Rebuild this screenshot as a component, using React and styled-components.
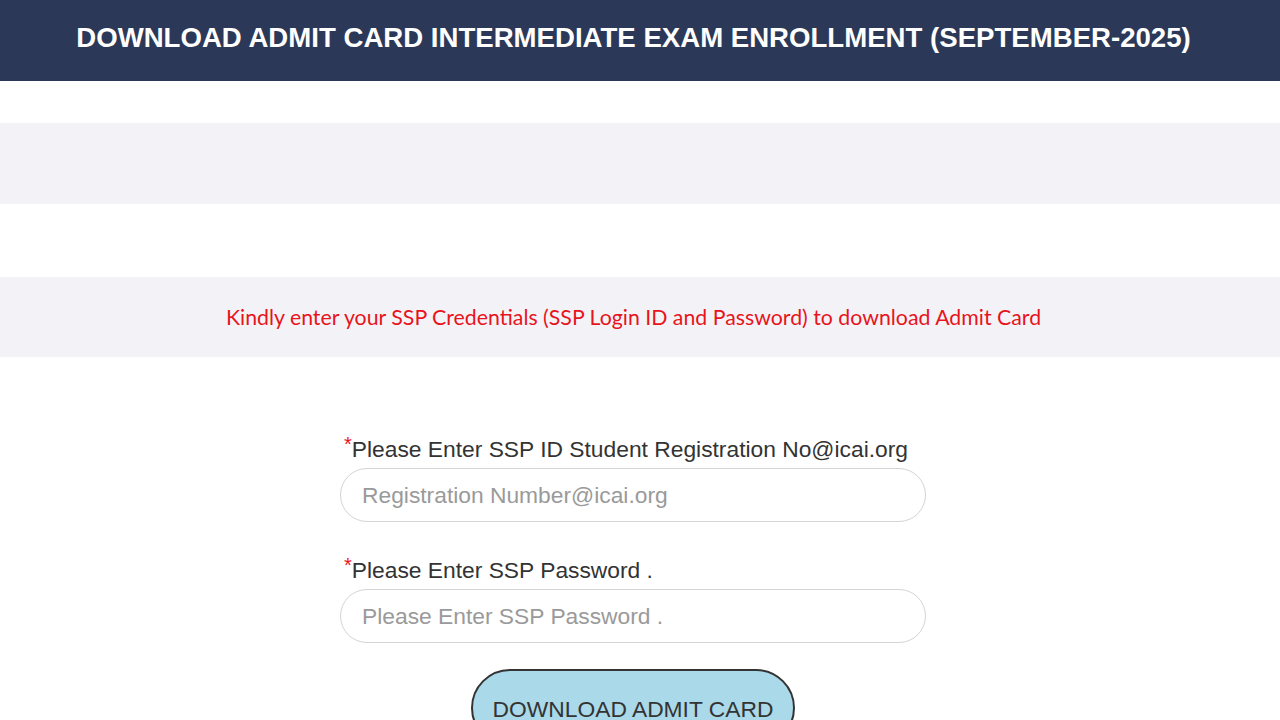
import React from "react";
import styled, { createGlobalStyle } from "styled-components";

const GlobalStyle = createGlobalStyle`
  body {
    margin: 0;
    background: #ffffff;
    font-family: "Liberation Sans", Arial, sans-serif;
  }
`;

const Header = styled.header`
  height: 81px;
  background: #2c3858;
  display: flex;
  align-items: center;
  justify-content: center;
  padding: 0 13px 6px 0;
  box-sizing: border-box;

  h1 {
    margin: 0;
    color: #ffffff;
    font-size: 27.6px;
    font-weight: bold;
    white-space: nowrap;
  }
`;

const Band = styled.div`
  height: ${(p) => p.h}px;
  background: ${(p) => (p.shaded ? "#f3f3f7" : "#ffffff")};
  display: flex;
  align-items: center;
  justify-content: center;
  padding-right: 13px;
`;

const Notice = styled.p`
  margin: 0;
  color: #e8141c;
  font-family: "Lato", "Open Sans", sans-serif;
  font-size: 21.3px;
  white-space: nowrap;
`;

const Form = styled.form`
  width: 586px;
  margin: 79px 0 0 calc(50% - 300px);
  display: flex;
  flex-direction: column;
`;

const Field = styled.div`
  display: flex;
  flex-direction: column;
  margin-bottom: ${(p) => (p.last ? 26 : 35)}px;
`;

const Label = styled.label`
  color: #333333;
  font-size: 22.8px;
  padding-left: 4px;
  margin-bottom: 6px;
  line-height: 26px;
  white-space: nowrap;

  span {
    color: #e8141c;
    font-size: 20px;
    vertical-align: top;
    line-height: 16px;
  }
`;

const Input = styled.input`
  height: 54px;
  box-sizing: border-box;
  border: 1px solid #d4d4d4;
  border-radius: 27px;
  padding: 0 21px;
  font-family: "Liberation Sans", Arial, sans-serif;
  font-size: 22.8px;
  color: #333;
  background: #fff;
  outline: none;

  &::placeholder {
    color: #9a9a9a;
  }
`;

const Button = styled.button`
  align-self: center;
  height: 78px;
  padding: 27px 20px 0;
  background: #aad9e9;
  border: 2px solid #333333;
  border-radius: 40px;
  color: #333333;
  font-family: "Liberation Sans", Arial, sans-serif;
  font-size: 22.8px;
  line-height: 1;
  display: flex;
  align-items: flex-start;
  box-sizing: border-box;
`;

export default function App() {
  return (
    <>
      <GlobalStyle />
      <Header>
        <h1>DOWNLOAD ADMIT CARD INTERMEDIATE EXAM ENROLLMENT (SEPTEMBER-2025)</h1>
      </Header>
      <Band h={42} />
      <Band h={81} shaded />
      <Band h={73} />
      <Band h={80} shaded>
        <Notice>
          Kindly enter your SSP Credentials (SSP Login ID and Password) to download Admit Card
        </Notice>
      </Band>
      <Form onSubmit={(e) => e.preventDefault()}>
        <Field>
          <Label>
            <span>*</span>Please Enter SSP ID Student Registration No@icai.org
          </Label>
          <Input type="text" placeholder="Registration Number@icai.org" />
        </Field>
        <Field last>
          <Label>
            <span>*</span>Please Enter SSP Password .
          </Label>
          <Input type="password" placeholder="Please Enter SSP Password ." />
        </Field>
        <Button type="submit">DOWNLOAD ADMIT CARD</Button>
      </Form>
    </>
  );
}
